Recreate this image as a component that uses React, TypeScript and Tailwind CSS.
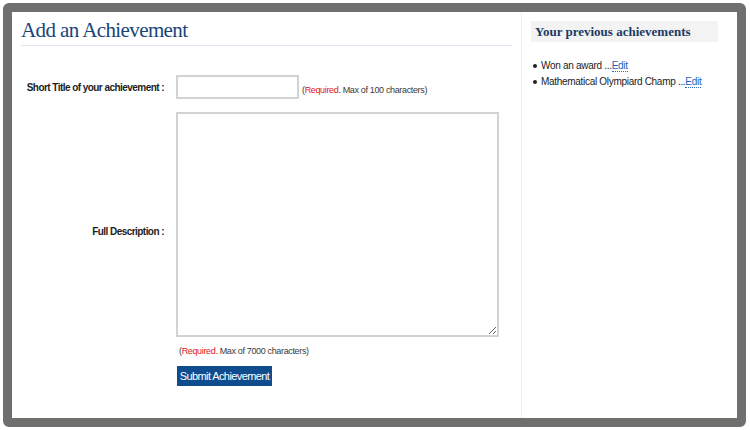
import React from "react";

const previous = [
  { id: 1, title: "Won an award" },
  { id: 2, title: "Mathematical Olympiard Champ" },
];

function Note({ max }: { max: string }) {
  return (
    <span className="whitespace-nowrap text-[9px] tracking-[-0.35px] text-[#3a3a3a]">
      (<span className="text-[#e0141e]">Required</span>. Max of {max} characters)
    </span>
  );
}

export default function App() {
  return (
    <div className="h-[430px] w-[750px] bg-white pl-[3px] pt-[3px] font-['Liberation_Sans',Arial,sans-serif]">
      <div className="flex h-[424px] w-[743px] rounded-[6px] border-[9px] border-[#6f706e] bg-white">
        {/* main form column */}
        <div className="w-[510px] border-r border-[#f0f0f0] pl-[9px] pr-[9px]">
          <h1 className="mt-[5px] border-b border-[#dde5f4] pb-[2px] font-['Liberation_Serif',Georgia,serif] text-[21px] leading-[26px] tracking-[-0.6px] text-[#17457a]">
            Add an Achievement
          </h1>

          <div className="mt-[28px] flex items-center">
            <label className="w-[144px] whitespace-nowrap pr-[1px] text-right text-[10px] font-bold tracking-[-0.55px] text-[#1d1d1d]">
              Short Title of your achievement :
            </label>
            <input
              type="text"
              className="ml-[11px] h-[24px] w-[123px] border-2 border-[#d3d3d3] bg-white outline-none"
            />
            <span className="ml-[3px] mt-[2px]">
              <Note max="100" />
            </span>
          </div>

          <div className="mt-[12px] flex items-center">
            <label className="mt-[13px] w-[144px] whitespace-nowrap pr-[1px] text-right text-[10px] font-bold tracking-[-0.55px] text-[#1d1d1d]">
              Full Description :
            </label>
            <textarea className="ml-[11px] block h-[225px] w-[323px] resize border-2 border-[#d3d3d3] bg-white outline-none" />
          </div>

          <div className="ml-[158px] mt-[5px] leading-[14px]">
            <Note max="7000" />
          </div>

          <button className="ml-[156px] mt-[8px] h-[20px] w-[95px] whitespace-nowrap bg-[#0f4d8f] text-[11px] leading-[20px] tracking-[-0.6px] text-white">
            Submit Achievement
          </button>
        </div>

        {/* sidebar */}
        <div className="flex-1 pl-[9px] pr-[19px] pt-[9px]">
          <h2 className="h-[21px] bg-[#f3f3f3] pl-[4px] font-['Liberation_Serif',Georgia,serif] text-[13px] font-bold leading-[22px] text-[#1d3a63]">
            Your previous achievements
          </h2>
          <ul className="mt-[16px] text-[10px] leading-[16px] tracking-[-0.3px] text-[#222]">
            {previous.map((item) => (
              <li key={item.id} className="flex items-center whitespace-nowrap">
                <span className="mr-[4px] ml-[2px] inline-block h-[4px] w-[4px] rounded-full bg-[#222]" />
                {item.title} ...
                <a href="#" className="border-b border-dotted border-[#2a6ab8] leading-[11px] text-[#1d62b5]">
                  Edit
                </a>
              </li>
            ))}
          </ul>
        </div>
      </div>
    </div>
  );
}
